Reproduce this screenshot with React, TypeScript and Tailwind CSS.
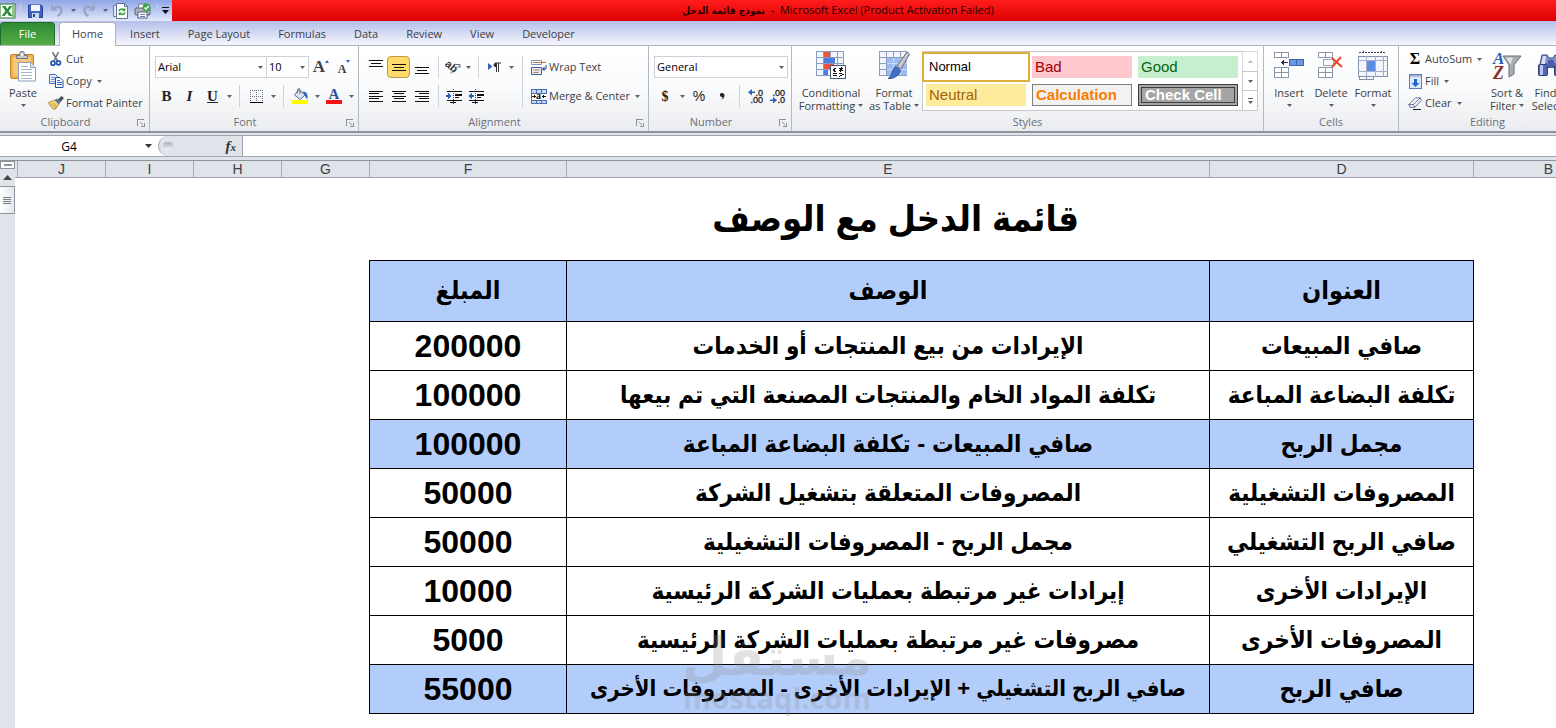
import React from 'react';

const UI_FONT = 'font-["Open_Sans","Noto_Sans",sans-serif]';

interface RowData {
  title: string;
  description: string;
  amount: number;
  highlight?: boolean;
  compact?: boolean;
}

const rows: RowData[] = [
  { title: 'صافي المبيعات', description: 'الإيرادات من بيع المنتجات أو الخدمات', amount: 200000 },
  { title: 'تكلفة البضاعة المباعة', description: 'تكلفة المواد الخام والمنتجات المصنعة التي تم بيعها', amount: 100000 },
  { title: 'مجمل الربح', description: 'صافي المبيعات - تكلفة البضاعة المباعة', amount: 100000, highlight: true },
  { title: 'المصروفات التشغيلية', description: 'المصروفات المتعلقة بتشغيل الشركة', amount: 50000 },
  { title: 'صافي الربح التشغيلي', description: 'مجمل الربح - المصروفات التشغيلية', amount: 50000 },
  { title: 'الإيرادات الأخرى', description: 'إيرادات غير مرتبطة بعمليات الشركة الرئيسية', amount: 10000 },
  { title: 'المصروفات الأخرى', description: 'مصروفات غير مرتبطة بعمليات الشركة الرئيسية', amount: 5000 },
  {
    title: 'صافي الربح',
    description: 'صافي الربح التشغيلي + الإيرادات الأخرى - المصروفات الأخرى',
    amount: 55000,
    highlight: true,
    compact: true,
  },
];

const columns = [
  { name: 'J', width: 'w-[88px]' },
  { name: 'I', width: 'w-[88px]' },
  { name: 'H', width: 'w-[88px]' },
  { name: 'G', width: 'w-[88px]' },
  { name: 'F', width: 'w-[197px]' },
  { name: 'E', width: 'w-[643px]' },
  { name: 'D', width: 'w-[264px]' },
  { name: 'B', width: 'w-[150px]' },
];

const tabs = ['Insert', 'Page Layout', 'Formulas', 'Data', 'Review', 'View', 'Developer'];

/* ---------- small pieces ---------- */

function Caret({ className = 'text-[#5c5f66]' }: { className?: string }) {
  return (
    <svg width="5" height="3" viewBox="0 0 5 3" className={`shrink-0 ${className}`} aria-hidden="true">
      <path d="M0 0h5L2.5 3z" fill="currentColor" />
    </svg>
  );
}

function Divider({ className = 'h-[22px] w-2.5' }: { className?: string }) {
  return (
    <span className={`flex shrink-0 justify-center ${className}`}>
      <span className="w-px bg-[#cfd2d8]" />
    </span>
  );
}

interface IconButtonProps {
  label: string;
  className?: string;
  children: React.ReactNode;
}

function IconButton({ label, className = 'w-[22px]', children }: IconButtonProps) {
  return (
    <button aria-label={label} className={`flex h-[22px] shrink-0 items-center justify-center ${className}`}>
      {children}
    </button>
  );
}

function CaretButton({ label, className = 'w-2.5' }: { label: string; className?: string }) {
  return (
    <IconButton label={label} className={className}>
      <Caret />
    </IconButton>
  );
}

interface GroupProps {
  name: string;
  className: string;
  launcher?: boolean;
  children: React.ReactNode;
}

function Group({ name, className, launcher, children }: GroupProps) {
  return (
    <section aria-label={name} className={`flex h-[85px] flex-col border-r border-[#b4b8c0] ${className}`}>
      <div className="flex h-[68px] shrink-0">{children}</div>
      <div className="flex h-[19px] items-center px-1">
        <span className={`flex-1 whitespace-nowrap text-center text-[#6b6f7a] ${launcher ? 'pr-2.5' : ''}`}>{name}</span>
        {launcher && (
          <button aria-label={`${name} settings`}>
            <svg width="8" height="8" viewBox="0 0 8 8" shapeRendering="crispEdges" aria-hidden="true">
              <path d="M0.5 7V0.5H7M3.5 3.5l3 3M7.5 3.5v4h-4" fill="none" stroke="#8b8f98" />
            </svg>
          </button>
        )}
      </div>
    </section>
  );
}

function Combo({ label, value, className }: { label: string; value: string; className: string }) {
  return (
    <div className={`relative ${className}`}>
      <select
        aria-label={label}
        defaultValue={value}
        className="block h-[22px] w-full appearance-none border border-[#cdd0d6] bg-white pl-0.5 text-black outline-none"
      >
        <option>{value}</option>
      </select>
      <span className="pointer-events-none absolute inset-y-0 right-1 flex items-center">
        <Caret />
      </span>
    </div>
  );
}

function TextButton({ label, icon, caret }: { label: string; icon: React.ReactNode; caret?: boolean }) {
  return (
    <button className="flex h-[22px] items-center whitespace-nowrap">
      <span className="mr-0.5 flex w-4 justify-center">{icon}</span>
      {label}
      {caret && <Caret className="ml-[5px] text-[#5c5f66]" />}
    </button>
  );
}

interface LargeButtonProps {
  lines: string[];
  icon: React.ReactNode;
  className: string;
}

function LargeButton({ lines, icon, className }: LargeButtonProps) {
  return (
    <button className={`flex shrink-0 flex-col items-center pt-[5px] ${className}`}>
      <span className="flex h-[35px] items-start justify-center">{icon}</span>
      <span className="whitespace-nowrap leading-[13px]">{lines[0]}</span>
      <span className="flex h-[13px] items-center whitespace-nowrap leading-[13px]">
        {lines[1]}
        <Caret className={lines[1] ? 'ml-[3px] text-[#5c5f66]' : 'text-[#5c5f66]'} />
      </span>
    </button>
  );
}

/* ---------- icons ---------- */

function ExcelIcon() {
  return (
    <svg width="16" height="16" viewBox="0 0 16 16" aria-hidden="true">
      <rect x="0" y="1" width="15" height="14" fill="#eef6ec" stroke="#2c7a35" />
      <rect x="1" y="2" width="11" height="12" fill="#fff" />
      <path d="M12 2h3v12h-3z" fill="#8fc58d" />
      <path d="M2 3h3.4l1.9 3 2-3h3L8.800 8l3.700 5H9L7 9.800 4.900 13H1.700L5.400 8z" fill="#2b8c3a" />
    </svg>
  );
}

function SaveIcon() {
  return (
    <svg width="15" height="14" viewBox="0 0 15 14" aria-hidden="true">
      <path d="M1 1h12l1.500 1.500V13.500H.5V1z" fill="#3f62c4" stroke="#27418f" />
      <rect x="3" y="1" width="9" height="6" fill="#f3f6ff" />
      <rect x="4" y="9" width="7" height="5" fill="#cdd6ef" />
      <rect x="5" y="10" width="2" height="3" fill="#27418f" />
    </svg>
  );
}

function UndoIcon({ flip }: { flip?: boolean }) {
  return (
    <svg width="14" height="13" viewBox="0 0 14 13" className={flip ? '-scale-x-100' : ''} aria-hidden="true">
      <path d="M1 0v6.500h6.500z" fill="#9aa4c4" />
      <path d="M3.500 5C6 1.500 11.500 2 11.500 6.500c0 3-2 4.500-4 5.500" fill="none" stroke="#9aa4c4" strokeWidth="2.400" />
    </svg>
  );
}

function RefreshPageIcon() {
  return (
    <svg width="16" height="16" viewBox="0 0 16 16" aria-hidden="true">
      <path d="M.5 2.500h4v11h-4z" fill="#e6ebf7" stroke="#7181a5" />
      <path d="M3.500.5h8l3 3v12h-11z" fill="#fff" stroke="#5f7097" />
      <path d="M11.500.5v3h3" fill="none" stroke="#5f7097" />
      <path d="M6 8c.5-2 3.500-2.500 5-1M12 9.500c-.5 2-3.500 2.500-5 1" fill="none" stroke="#2e9a3c" strokeWidth="1.500" />
      <path d="M12.300 4.800v3.400H9zM5.700 12.800V9.400H9z" fill="#2e9a3c" />
    </svg>
  );
}

function PrinterIcon() {
  return (
    <svg width="18" height="16" viewBox="0 0 18 16" aria-hidden="true">
      <path d="M5 1h7v5H4z" fill="#fff" stroke="#6f7686" />
      <rect x="1" y="5" width="15" height="7" rx="1" fill="#aeb4c1" stroke="#5b6170" />
      <rect x="4" y="9" width="9" height="6" fill="#fff" stroke="#5b6170" />
      <path d="M6 11.500h5M6 13.500h5" stroke="#5c7fd0" />
      <circle cx="12.500" cy="4.500" r="4" fill="#3aa845" />
      <path d="M10.500 4.500l1.500 1.700L14.700 3" fill="none" stroke="#fff" strokeWidth="1.400" />
    </svg>
  );
}

function PasteIcon() {
  return (
    <svg width="28" height="31" viewBox="0 0 28 31" aria-hidden="true">
      <rect x="1.500" y="3.500" width="23" height="24" rx="1.500" fill="#efb04d" stroke="#c8862a" />
      <path d="M4 6h18v19H4z" fill="#f6c777" />
      <path d="M7.500 7.500V4.500h3C10.500 1.500 11 .5 13 .5s2.500 1 2.500 4h3v3z" fill="#c6c9cf" stroke="#70747d" />
      <rect x="12" y="2.500" width="2" height="2" fill="#fff" />
      <path d="M9.500 11.500h12l5 5v13.500h-17z" fill="#fff" stroke="#8b9cc0" />
      <path d="M21.500 11.500v5h5" fill="#dfe6f5" stroke="#8b9cc0" />
      <path d="M12 15.500h7M12 18.500h11M12 21.500h11M12 24.500h11M12 27.500h11" stroke="#a9b6d2" />
    </svg>
  );
}

function CutIcon() {
  return (
    <svg width="12" height="15" viewBox="0 0 12 15" aria-hidden="true">
      <path d="M2.500 0L7.500 9M8.500 0L4 9" stroke="#6d7683" strokeWidth="1.600" />
      <circle cx="3" cy="11.200" r="2" fill="none" stroke="#2b56b4" strokeWidth="1.700" />
      <circle cx="8.500" cy="10.800" r="2" fill="none" stroke="#2b56b4" strokeWidth="1.700" />
    </svg>
  );
}

function CopyIcon() {
  return (
    <svg width="15" height="14" viewBox="0 0 15 14" aria-hidden="true">
      <path d="M.5.5h6l2 2v7h-8z" fill="#eaf1fd" stroke="#3f6cc0" />
      <path d="M2 3.500h4M2 5.500h5M2 7.500h5" stroke="#6f93d6" />
      <path d="M6.500 3.500h4.500l3 3v7H6.500z" fill="#fff" stroke="#1f4ca8" />
      <path d="M8 6.500h3M8 8.500h5M8 10.500h5" stroke="#2f66cc" />
    </svg>
  );
}

function BrushIcon() {
  return (
    <svg width="16" height="14" viewBox="0 0 16 14" aria-hidden="true">
      <path d="M.5 6.500L7 4l4 4-4 5.500c-2.500-.5-5-3-6.500-7z" fill="#f3d57b" stroke="#b8923a" />
      <path d="M3 8l5 4M5 7l4 3.500" stroke="#c99f3f" />
      <path d="M6.500 4l2.500-1.500 3.500 3.500L11 8.500z" fill="#5673a8" />
      <path d="M10 3.500L13.500 0 16 2l-3.500 4z" fill="#4b4f58" />
    </svg>
  );
}

function LinesIcon({ lines }: { lines: [number, number, number][] }) {
  return (
    <svg width="14" height="15" viewBox="0 0 14 15" shapeRendering="crispEdges" aria-hidden="true">
      {lines.map(([x, y, w]) => (
        <rect key={y} x={x} y={y} width={w} height="1" fill="#111" />
      ))}
    </svg>
  );
}

function BordersIcon() {
  return (
    <svg width="13" height="13" viewBox="0 0 13 13" shapeRendering="crispEdges" aria-hidden="true">
      <path d="M0 .5h13M0 6.500h13M.5 0v12M6.500 0v12M12.500 0v12" stroke="#6a6d75" strokeDasharray="1 1" />
      <path d="M0 12.500h13" stroke="#000" />
    </svg>
  );
}

function FillColorIcon() {
  return (
    <svg width="16" height="16" viewBox="0 0 16 16" aria-hidden="true">
      <path d="M7 1.500l6 5.500-5 4.500L2.500 7z" fill="#dbe3f3" stroke="#566f9f" />
      <path d="M5.500 5V1.500C5.500.3 8 .3 8 1.500V6" fill="none" stroke="#656a75" />
      <path d="M10.500 3.500c4 0 5.500 2 5 7.500-2-1-2.500-2.500-2.500-4z" fill="#2f61bd" />
      <rect x="0" y="12" width="16" height="4" fill="#ffff00" />
    </svg>
  );
}

function OrientationIcon() {
  return (
    <svg width="16" height="14" viewBox="0 0 16 14" aria-hidden="true">
      <text x="0" y="9" fontSize="11" fontWeight="bold" fontFamily="Liberation Sans" transform="rotate(40 5 6)" fill="#333">
        ab
      </text>
      <path d="M5.500 13.500l9-8M11 4.500h4V8" fill="none" stroke="#6a6e78" />
    </svg>
  );
}

function RtlIcon() {
  return (
    <svg width="13" height="11" viewBox="0 0 13 11" aria-hidden="true">
      <path d="M0 1l4.500 3.500L0 8z" fill="#2d63c0" />
      <path d="M9 1H7.500a2 2 0 0 0 0 4H9z" fill="#333" />
      <path d="M8.500 1v9M10.500 1v9M7 1h6" stroke="#333" />
    </svg>
  );
}

function IndentIcon({ decrease }: { decrease?: boolean }) {
  return (
    <svg width="16" height="15" viewBox="0 0 16 15" shapeRendering="crispEdges" aria-hidden="true">
      <path d="M7.500 0v15" stroke="#444" strokeDasharray="1 1" />
      <path d="M1 2.500h15M9 8.500h4M1 11.500h15M4 13.500h6" stroke="#111" strokeWidth="1" />
      <path d="M9 5h7v2H9z" fill="#111" />
      <path d={decrease ? 'M0 7l4-3v2h2v2H4v2z' : 'M6 7L2 4v2H0v2h2v2z'} fill="#2d63c0" />
    </svg>
  );
}

function WrapIcon() {
  return (
    <svg width="16" height="15" viewBox="0 0 16 15" aria-hidden="true">
      <path d="M.5.5h10v4H.5z" fill="#fff" stroke="#8495ba" />
      <path d="M2 2.500h13" stroke="#b9753a" />
      <path d="M.5 7.500h10v7H.5z" fill="#e6edfa" stroke="#3d5ca4" />
      <path d="M2.500 10h6M2.500 12.500h5" stroke="#b9753a" />
      <path d="M15 5v4h-2.500" fill="none" stroke="#2f4d8e" />
      <path d="M13.500 6.500v5L11 9z" fill="#2f4d8e" />
    </svg>
  );
}

function MergeIcon() {
  return (
    <svg width="16" height="15" viewBox="0 0 16 15" shapeRendering="crispEdges" aria-hidden="true">
      <path d="M.5.500h15v14H.5z" fill="#c9d8f4" stroke="#4a6cb3" />
      <path d="M5.500 0v4M10.500 0v4M5.500 11v4M10.500 11v4" stroke="#4a6cb3" />
      <path d="M0 4h16v7H0z" fill="#fff" stroke="#4a6cb3" />
      <path d="M1 7.500h4M11 7.500h4M3.500 6v3M12.500 6v3" stroke="#111" />
      <text x="5" y="10" fontSize="10" fontWeight="bold" fontFamily="Liberation Serif" fill="#111">
        a
      </text>
    </svg>
  );
}

function DecimalIcon({ decrease }: { decrease?: boolean }) {
  return (
    <svg width="17" height="15" viewBox="0 0 17 15" aria-hidden="true">
      <g fontSize="9" fontFamily="Liberation Sans" fill="#222" stroke="#222" strokeWidth="0.300" textAnchor="end">
        <text x="16" y="7">{decrease ? '.00' : '.0'}</text>
        <text x="16" y="14">{decrease ? '.0' : '.00'}</text>
      </g>
      {decrease ? (
        <path d="M1 10.500h3V8l4 3.200-4 3.200v-2.400H1z" fill="#2d63c0" />
      ) : (
        <path d="M8 2.500H5V0L1 3.200l4 3.200V4h3z" fill="#2d63c0" />
      )}
    </svg>
  );
}

function GridBase() {
  return (
    <>
      <rect x=".5" y=".5" width="27" height="24" fill="#f2f5fb" stroke="#8b9cc0" />
      <path d="M7.500 0v25M14.500 0v25M21.500 0v25M0 6.500h28M0 12.500h28M0 18.500h28" stroke="#8b9cc0" />
    </>
  );
}

function ConditionalIcon() {
  return (
    <svg width="31" height="29" viewBox="0 0 31 29" shapeRendering="crispEdges" aria-hidden="true">
      <GridBase />
      <path d="M8 1h6v5H8zM8 13h10v5H8z" fill="#f0533a" />
      <path d="M8 7h11v5H8zM8 19h4v5H8z" fill="#4a7fe0" />
      <rect x="14.500" y="14.500" width="15" height="13" fill="#fff" stroke="#4b5878" />
      <path d="M20 17l-3 2 3 2M17 22.500h4M17 24.500h4M23 17.500h4M23 19.500h4M26 16l-2 5M23 22l4 1.500-4 2" fill="none" stroke="#111" />
    </svg>
  );
}

function FormatTableIcon() {
  return (
    <svg width="31" height="29" viewBox="0 0 31 29" aria-hidden="true">
      <GridBase />
      <path d="M8 7h20v17H8z" fill="#9dbbf0" />
      <path d="M14.500 7v17M21.500 7v17M8 12.500h20M8 18.500h20" stroke="#c8d8f6" />
      <path d="M28 1l2.500 2L22 18l-4-3z" fill="#c7c9ce" stroke="#6a6d75" />
      <path d="M16.500 15.500l5 4C20 25 14 28 9 27.500c4-2 4-9 7.500-12z" fill="#3e72c9" stroke="#2b539b" />
    </svg>
  );
}

function CellBlock({ y }: { y: number }) {
  return (
    <g transform={`translate(0 ${y})`}>
      <path d="M.5.5h14v10H.5z" fill="#fff" stroke="#8a94aa" />
      <path d="M.5 5.500h14M7.500.5v10" stroke="#8a94aa" />
    </g>
  );
}

function InsertCellsIcon() {
  return (
    <svg width="31" height="28" viewBox="0 0 31 28" shapeRendering="crispEdges" aria-hidden="true">
      <path d="M.5 1.500h14v5H.5zM7.500 1v6" fill="#fff" stroke="#8a94aa" />
      <CellBlock y={16} />
      <path d="M15.500 8.500h14v6h-14z" fill="#6d98ea" stroke="#4365ae" />
      <path d="M22.500 8v7" stroke="#4365ae" />
      <path d="M7 11.500h7M9.500 9v5M8.500 10v3" stroke="#222b44" />
    </svg>
  );
}

function DeleteCellsIcon() {
  return (
    <svg width="26" height="28" viewBox="0 0 26 28" aria-hidden="true">
      <path d="M.5 1.500h14v5H.5zM7.500 1v6" fill="#fff" stroke="#8a94aa" />
      <CellBlock y={16} />
      <path d="M5.500 8.500h10v6h-10z" fill="none" stroke="#2f4a8a" strokeDasharray="1 1" />
      <path d="M14 7l10 9M23 6L14 16" stroke="#e8442a" strokeWidth="2" />
    </svg>
  );
}

function FormatCellsIcon() {
  return (
    <svg width="31" height="29" viewBox="0 0 31 29" shapeRendering="crispEdges" aria-hidden="true">
      <path d="M1 1.500h26M5.500 0v3M23.500 0v3" stroke="#33405f" strokeDasharray="2 1" />
      <rect x=".5" y="5.500" width="29" height="20" fill="#f2f5fb" stroke="#8390ac" />
      <path d="M8.500 5v21M17.500 5v21M25.500 5v21M0 9.500h30M0 20.500h30" stroke="#a5b0c8" />
      <rect x="9" y="10" width="8" height="10" fill="#5e8be6" />
      <path d="M1 26v2h7v-2M8 28h7v-2" fill="none" stroke="#8390ac" />
    </svg>
  );
}

function FillDownIcon() {
  return (
    <svg width="13" height="15" viewBox="0 0 13 15" aria-hidden="true">
      <rect x=".5" y=".5" width="12" height="14" fill="#dfe9fb" stroke="#5c79b8" />
      <path d="M1 1h11v2H1z" fill="#a9b9dc" />
      <path d="M5 5h3v4h2.500l-4 4-4-4H5z" fill="#1f66d0" />
    </svg>
  );
}

function EraserIcon() {
  return (
    <svg width="14" height="13" viewBox="0 0 14 13" aria-hidden="true">
      <path d="M7.500.8h4.800l1 2.500-6.500 7H2L.8 7.500z" fill="#f4f6fb" stroke="#69759a" />
      <path d="M.8 7.500h4.700l1.300 2.800M5.500 7.500L12.300.8" fill="none" stroke="#69759a" />
      <path d="M5 12.500h8" stroke="#222" />
    </svg>
  );
}

function SortFilterIcon() {
  return (
    <svg width="30" height="30" viewBox="0 0 30 30" aria-hidden="true">
      <text x="1" y="13" fontSize="17" fontStyle="italic" fontWeight="bold" fontFamily="Liberation Serif" fill="#2c5cb3">
        A
      </text>
      <text x="1" y="28" fontSize="18" fontStyle="italic" fontWeight="bold" fontFamily="Liberation Serif" fill="#8c2f22">
        Z
      </text>
      <path d="M11 5h18l-7 9v9l-5 3V14z" fill="#a9acb2" stroke="#6d7078" />
      <path d="M14 6.500h7l-2.500 7z" fill="#dfe1e5" />
    </svg>
  );
}

function BinocularsIcon() {
  return (
    <svg width="28" height="28" viewBox="0 0 28 28" aria-hidden="true">
      <path d="M5 4h5l2 3h4l2-3h5l2 9H3z" fill="#7f92cf" stroke="#39497f" />
      <path d="M6 5l-2 8h4L9 5z" fill="#d9e0f6" />
      <rect x="1.500" y="13.500" width="9" height="11" rx="1" fill="#5268b5" stroke="#2c3b74" />
      <rect x="17.500" y="13.500" width="9" height="11" rx="1" fill="#5268b5" stroke="#2c3b74" />
      <rect x="3" y="14" width="3" height="10" fill="#b9c5ee" />
      <rect x="19" y="14" width="3" height="10" fill="#b9c5ee" />
      <rect x="11" y="9" width="6" height="8" fill="#4a5ea6" />
    </svg>
  );
}

/* ---------- page sections ---------- */

function TitleBar() {
  return (
    <header className="flex h-[21px] shrink-0">
      <div className="flex w-[172px] shrink-0 items-center overflow-hidden bg-linear-to-b from-[#8fa5e6] to-[#e3e8fb]">
        <IconButton label="Excel" className="w-4"><ExcelIcon /></IconButton>
        <Divider className="h-3.5 w-2" />
        <IconButton label="Save"><SaveIcon /></IconButton>
        <IconButton label="Undo"><UndoIcon /></IconButton>
        <CaretButton label="Undo history" />
        <IconButton label="Redo"><UndoIcon flip /></IconButton>
        <CaretButton label="Redo history" />
        <IconButton label="Refresh"><RefreshPageIcon /></IconButton>
        <IconButton label="Print"><PrinterIcon /></IconButton>
        <Divider className="h-3.5 w-1.5" />
        <IconButton label="Customize toolbar" className="w-2.5">
          <svg width="7" height="7" viewBox="0 0 7 7" aria-hidden="true">
            <path d="M0 0h7v1H0zM0 3h7L3.500 7z" fill="#111" />
          </svg>
        </IconButton>
      </div>
      <div className="flex flex-1 items-center justify-center overflow-hidden bg-linear-to-b from-[#ff1c1c] to-[#dd0000] pr-[52px]">
        <h1 className="whitespace-pre text-[11px] text-[#2a0000]">
          <bdi className='font-["DejaVu_Sans_Condensed","DejaVu_Sans",sans-serif] text-[10px] font-bold'>نموذج قائمة الدخل</bdi>
          {'  -  Microsoft Excel (Product Activation Failed)'}
        </h1>
      </div>
    </header>
  );
}

function TabBar() {
  return (
    <nav className="flex h-[25px] shrink-0 items-end border-b border-[#b1b5bd] bg-linear-to-b from-[#b5bfe9] to-[#f6f6fc] text-[#3c3f46]">
      <button className="mr-1 h-[23px] w-[55px] rounded-t-sm border border-b-0 border-[#1f6b2b] bg-linear-to-b from-[#2f8a35] to-[#54ad45] text-white">
        File
      </button>
      <button className="-mb-px h-6 rounded-t border border-b-0 border-[#b1b5bd] bg-white px-3">Home</button>
      {tabs.map((tab) => (
        <button key={tab} className="h-[22px] whitespace-nowrap px-3.5">
          {tab}
        </button>
      ))}
    </nav>
  );
}

function FontGroup() {
  return (
    <Group name="Font" className="w-[209px] shrink-0" launcher>
      <div className="flex flex-col gap-[7px] pl-[5px] pt-2.5">
        <div className="flex">
          <Combo label="Font" value="Arial" className="w-28" />
          <Combo label="Font size" value="10" className="-ml-px w-[43px]" />
          <IconButton label="Grow font" className="w-6">
            <span className="font-['Liberation_Serif',serif] text-[17px] font-bold">A</span>
            <svg width="4" height="3" viewBox="0 0 4 3" className="-mt-3" aria-hidden="true"><path d="M0 3h4L2 0z" fill="#2d63c0" /></svg>
          </IconButton>
          <IconButton label="Shrink font">
            <span className="mt-1 font-['Liberation_Serif',serif] text-[12px] font-bold">A</span>
            <svg width="4" height="3" viewBox="0 0 4 3" className="-mt-3" aria-hidden="true"><path d="M0 0h4L2 3z" fill="#2d63c0" /></svg>
          </IconButton>
        </div>
        <div className="flex font-['Liberation_Serif',serif] text-[15px] font-bold text-[#222]">
          <IconButton label="Bold" className="w-[23px]">B</IconButton>
          <IconButton label="Italic" className="w-[23px]"><i>I</i></IconButton>
          <IconButton label="Underline" className="w-[23px]"><u>U</u></IconButton>
          <CaretButton label="Underline style" />
          <Divider />
          <IconButton label="Borders" className="w-6"><BordersIcon /></IconButton>
          <CaretButton label="Border style" />
          <Divider />
          <IconButton label="Fill color" className="w-6"><FillColorIcon /></IconButton>
          <CaretButton label="Fill color list" />
          <IconButton label="Font color" className="w-6 flex-col">
            <span className="text-[15px] leading-3 text-[#2f539c]">A</span>
            <span className="h-1 w-4 bg-[#f01414]" />
          </IconButton>
          <CaretButton label="Font color list" />
        </div>
      </div>
    </Group>
  );
}

function AlignmentGroup() {
  return (
    <Group name="Alignment" className="w-[290px] shrink-0" launcher>
      <div className="flex flex-col gap-[7px] pl-[5px] pt-2.5">
        <div className="flex">
          <IconButton label="Top align" className="w-[23px]">
            <LinesIcon lines={[[0, 0, 14], [2, 3, 10], [0, 6, 14]]} />
          </IconButton>
          <IconButton label="Middle align" className="w-[23px] rounded-sm border border-[#c29b3e] bg-[#fedb6c]">
            <LinesIcon lines={[[0, 4, 14], [2, 7, 10], [0, 10, 14]]} />
          </IconButton>
          <IconButton label="Bottom align" className="w-[23px]">
            <LinesIcon lines={[[0, 7, 14], [2, 10, 10], [0, 13, 14]]} />
          </IconButton>
          <Divider />
          <IconButton label="Orientation" className="w-5"><OrientationIcon /></IconButton>
          <CaretButton label="Orientation list" />
          <Divider />
          <IconButton label="Text direction"><RtlIcon /></IconButton>
          <CaretButton label="Text direction list" className="w-3" />
        </div>
        <div className="flex">
          <IconButton label="Align left" className="w-[23px]">
            <LinesIcon lines={[[0, 2, 14], [0, 4, 10], [0, 7, 14], [0, 9, 10], [0, 12, 14]]} />
          </IconButton>
          <IconButton label="Center" className="w-[23px]">
            <LinesIcon lines={[[0, 2, 14], [2, 4, 10], [0, 7, 14], [2, 9, 10], [0, 12, 14]]} />
          </IconButton>
          <IconButton label="Align right" className="w-[23px]">
            <LinesIcon lines={[[0, 2, 14], [4, 4, 10], [0, 7, 14], [4, 9, 10], [0, 12, 14]]} />
          </IconButton>
          <Divider />
          <IconButton label="Increase indent"><IndentIcon /></IconButton>
          <IconButton label="Decrease indent"><IndentIcon decrease /></IconButton>
        </div>
      </div>
      <Divider className="mt-2.5 h-[51px] w-2.5" />
      <div className="flex flex-col gap-[7px] pl-1 pt-2.5">
        <TextButton label="Wrap Text" icon={<WrapIcon />} />
        <TextButton label="Merge & Center" icon={<MergeIcon />} caret />
      </div>
    </Group>
  );
}

function NumberGroup() {
  return (
    <Group name="Number" className="w-[143px] shrink-0" launcher>
      <div className="flex flex-col gap-[7px] pl-[5px] pt-2.5">
        <Combo label="Number format" value="General" className="w-[134px]" />
        <div className="flex text-[14px] text-[#222]">
          <IconButton label="Currency"><b className="font-['Liberation_Serif',serif]">$</b></IconButton>
          <CaretButton label="Currency list" className="w-3" />
          <IconButton label="Percent"><span className="font-['Liberation_Sans',sans-serif]">%</span></IconButton>
          <IconButton label="Comma style" className="w-6">
            <svg width="5" height="7" viewBox="0 0 5 7" aria-hidden="true">
              <path d="M2 0a2 2 0 1 0 .6 3.900C2.500 5 2 5.800 1 6.500 3.500 6 4.500 4 4.500 2.500 4.500 1 3.500 0 2 0z" fill="#222" />
            </svg>
          </IconButton>
          <Divider />
          <IconButton label="Increase decimal"><DecimalIcon /></IconButton>
          <IconButton label="Decrease decimal"><DecimalIcon decrease /></IconButton>
        </div>
      </div>
    </Group>
  );
}

const cellStyles = [
  { name: 'Normal', className: 'bg-white text-black text-[13px] outline-2 outline-offset-2 outline-[#e0ae3a]' },
  { name: 'Bad', className: 'bg-[#ffc7ce] text-[#9c0006] text-[15px]' },
  { name: 'Good', className: 'bg-[#c6efce] text-[#0b6116] text-[15px]' },
  { name: 'Neutral', className: 'bg-[#ffeb9c] text-[#a06508] text-[15px]' },
  { name: 'Calculation', className: 'border border-[#7f7f7f] bg-[#f2f2f2] text-[#fa7d00] text-[15px] font-bold' },
  { name: 'Check Cell', className: 'border-4 border-double border-[#3f3f3f] bg-[#a5a5a5] text-white text-[15px] font-bold' },
];

function StylesGroup() {
  return (
    <Group name="Styles" className="w-[472px] shrink-0">
      <LargeButton lines={['Conditional', 'Formatting']} icon={<ConditionalIcon />} className="ml-1 w-[70px]" />
      <LargeButton lines={['Format', 'as Table']} icon={<FormatTableIcon />} className="w-[56px]" />
      <div className="mt-[5px] flex h-[60px] border border-[#c5c8ce] bg-white">
        <div className="grid grid-cols-[100px_100px_100px] grid-rows-[22px_22px] gap-1.5 py-1 pl-[3px] pr-1">
          {cellStyles.map((style) => (
            <button
              key={style.name}
              className={`flex items-center overflow-hidden whitespace-nowrap pl-[3px] text-left font-['Liberation_Sans',sans-serif] leading-4 ${style.className}`}
            >
              {style.name}
            </button>
          ))}
        </div>
        <div className="-my-px -mr-px flex w-4 flex-col">
          <button aria-label="Previous styles" className="flex flex-1 items-center justify-center border border-[#d9dbe0]">
            <Caret className="rotate-180 text-[#b5b8be]" />
          </button>
          <button aria-label="Next styles" className="-mt-px flex flex-1 items-center justify-center border border-[#c5c8ce]">
            <Caret />
          </button>
          <button aria-label="More styles" className="-mt-px flex flex-1 flex-col items-center justify-center gap-0.5 border border-[#c5c8ce]">
            <span className="h-px w-[5px] bg-[#5c5f66]" />
            <Caret />
          </button>
        </div>
      </div>
    </Group>
  );
}

function Ribbon() {
  return (
    <div className="flex shrink-0 overflow-hidden border-b-2 border-[#8f949c] bg-linear-to-b from-white via-[#fafbfc] to-[#eaecef] text-[#3c3f46]">
      <Group name="Clipboard" className="w-[150px] shrink-0" launcher>
        <LargeButton lines={['Paste', '']} icon={<PasteIcon />} className="w-[46px]" />
        <div className="flex flex-col pl-0.5 pt-0.5">
          <TextButton label="Cut" icon={<CutIcon />} />
          <TextButton label="Copy" icon={<CopyIcon />} caret />
          <TextButton label="Format Painter" icon={<BrushIcon />} />
        </div>
      </Group>
      <FontGroup />
      <AlignmentGroup />
      <NumberGroup />
      <StylesGroup />
      <Group name="Cells" className="w-[135px] shrink-0">
        <LargeButton lines={['Insert', '']} icon={<InsertCellsIcon />} className="ml-1 w-[42px]" />
        <LargeButton lines={['Delete', '']} icon={<DeleteCellsIcon />} className="w-[42px]" />
        <LargeButton lines={['Format', '']} icon={<FormatCellsIcon />} className="w-[42px]" />
      </Group>
      <Group name="Editing" className="w-[178px] shrink-0">
        <div className="flex w-[86px] flex-col pl-2 pt-0.5">
          <TextButton
            label="AutoSum"
            icon={<b className="font-['Liberation_Serif',serif] text-[16px] text-black">Σ</b>}
            caret
          />
          <TextButton label="Fill" icon={<FillDownIcon />} caret />
          <TextButton label="Clear" icon={<EraserIcon />} caret />
        </div>
        <LargeButton lines={['Sort &', 'Filter']} icon={<SortFilterIcon />} className="w-[44px]" />
        <LargeButton lines={['Find &', 'Select']} icon={<BinocularsIcon />} className="w-[44px]" />
      </Group>
    </div>
  );
}

function FormulaBar() {
  return (
    <div className="shrink-0 bg-[#dfe3ea] pb-[3px] pt-0.5">
      <div className="flex h-[22px] border-y border-[#a0a4ad] bg-white">
        <div className="relative w-[158px] shrink-0">
          <input aria-label="Name box" defaultValue="G4" className="h-full w-full pr-5 text-center text-[12px] text-black outline-none" />
          <svg width="7" height="4" viewBox="0 0 7 4" className="pointer-events-none absolute right-1.5 top-2" aria-hidden="true">
            <path d="M0 0h7L3.500 4z" fill="#333" />
          </svg>
        </div>
        <div className="flex w-[85px] shrink-0 items-center justify-between rounded-l-full border-x border-[#a0a4ad] bg-[#dfe3ea] pl-1 pr-1.5">
          <span className="h-2 w-2.5 rounded-full bg-linear-to-b from-[#a9adb5] to-[#f4f5f7]" />
          <button aria-label="Insert function" className="font-['Liberation_Serif',serif] text-[15px] font-bold italic text-[#333]">
            f<span className="text-[11px]">x</span>
          </button>
        </div>
        <input aria-label="Formula" className="min-w-0 flex-1 bg-white outline-none" />
      </div>
    </div>
  );
}

function ScrollBar() {
  return (
    <div className="flex w-[15px] shrink-0 flex-col items-center bg-[#dfe3ea]">
      <div className="flex h-2 w-full items-center justify-center border border-[#8f949c] bg-white">
        <span className="h-0.5 w-2 bg-[#8f949c]" />
      </div>
      <button aria-label="Scroll up" className="flex h-[17px] items-center">
        <svg width="9" height="5" viewBox="0 0 9 5" aria-hidden="true">
          <path d="M0 5h9L4.500 0z" fill="#444" />
        </svg>
      </button>
      <div className="flex h-7 w-full flex-col items-center justify-center gap-px border border-l-0 border-[#8f949c] bg-linear-to-r from-white to-[#e4e7ec]">
        <span className="h-px w-2 bg-[#777b83]" />
        <span className="h-px w-2 bg-[#777b83]" />
        <span className="h-px w-2 bg-[#777b83]" />
        <span className="h-px w-2 bg-[#777b83]" />
      </div>
    </div>
  );
}

function Watermark() {
  return (
    <div
      aria-hidden="true"
      className="pointer-events-none absolute bottom-0 left-[313px] flex w-[190px] flex-col items-center text-[#8c8c8c] opacity-25"
    >
      <span className="font-['DejaVu_Sans',sans-serif] text-[52px] font-bold leading-[50px]">مستقل</span>
      <span className="font-['Open_Sans',sans-serif] text-[29px] font-bold leading-8">mostaql.com</span>
    </div>
  );
}

function Sheet() {
  return (
    <main className="flex-1 bg-white pl-[354px] font-['Liberation_Sans','DejaVu_Sans_Condensed','DejaVu_Sans',sans-serif] text-black">
      <div className="relative w-[1105px]">
        <h2 dir="rtl" className="flex h-[82px] items-center justify-center pr-[52px] text-[36px] font-bold">
          قائمة الدخل مع الوصف
        </h2>
        <table dir="rtl" className="w-full table-fixed border-collapse text-center font-bold">
          <colgroup>
            <col className="w-[264px]" />
            <col />
            <col className="w-[197px]" />
          </colgroup>
          <thead>
            <tr className="h-[61px] bg-[#b3cdfb] text-[25px]">
              <th className="border border-black">العنوان</th>
              <th className="border border-black">الوصف</th>
              <th className="border border-black">المبلغ</th>
            </tr>
          </thead>
          <tbody>
            {rows.map((row) => (
              <tr key={row.title} className={`h-[49px] leading-8 ${row.highlight ? 'bg-[#b3cdfb]' : 'bg-white'}`}>
                <td className="whitespace-nowrap border border-black text-[24px]">{row.title}</td>
                <td className={`whitespace-nowrap border border-black ${row.compact ? 'text-[22px]' : 'text-[24px]'}`}>
                  {row.description}
                </td>
                <td className="border border-black text-[32px]">{row.amount}</td>
              </tr>
            ))}
          </tbody>
        </table>
        <Watermark />
      </div>
    </main>
  );
}

export default function App() {
  return (
    <div className={`flex h-screen flex-col overflow-hidden bg-white text-[11px] ${UI_FONT}`}>
      <TitleBar />
      <TabBar />
      <Ribbon />
      <FormulaBar />
      <div className="flex min-h-0 flex-1 border-t border-[#8f949c]">
        <ScrollBar />
        <div className="flex min-w-0 flex-1 flex-col overflow-hidden">
          <div className="flex h-[17px] shrink-0 border-b border-[#a0a4b0] bg-[#dfe3ea] pl-0.5 font-['Liberation_Sans',sans-serif] text-[14px] leading-4 text-[#3c3f46]">
            {columns.map((column) => (
              <div key={column.name} className={`shrink-0 border-l border-[#a8acb8] text-center ${column.width}`}>
                {column.name}
              </div>
            ))}
          </div>
          <Sheet />
        </div>
      </div>
    </div>
  );
}
